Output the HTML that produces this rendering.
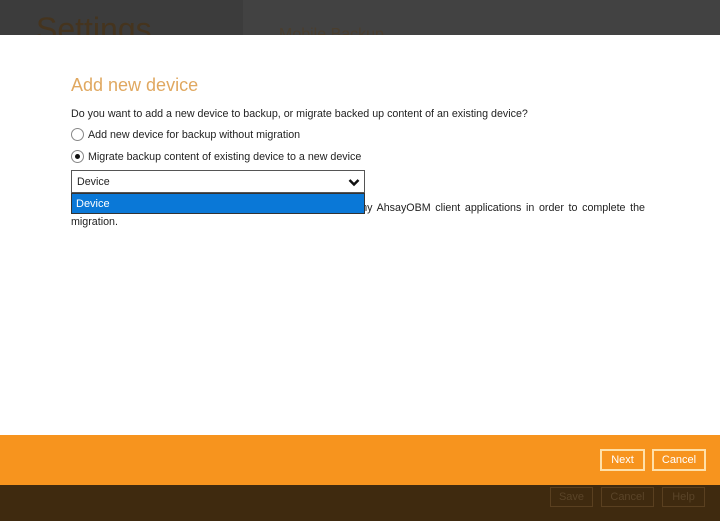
<!DOCTYPE html>
<html><head><meta charset="utf-8"><style>
*{margin:0;padding:0;box-sizing:border-box}
body{width:720px;height:521px;overflow:hidden;position:relative;font-family:"Liberation Sans",sans-serif;background:#fff}
.abs{position:absolute}
.t{font-size:10.7px;color:#222;white-space:nowrap}
.btn{position:absolute;border:2px solid #ffe0a8;color:#fff;font-size:11px;text-align:center;line-height:18px}
.bbtn{position:absolute;border:1px solid #5a4020;color:#5a4428;font-size:11px;text-align:center;line-height:18px}
</style></head><body>
<div class="abs" style="left:0;top:0;width:243px;height:35px;background:#3c3c3c;overflow:hidden">
<div class="abs" style="left:36px;top:9px;font-size:32px;color:#45341e;line-height:40px">Settings</div></div>
<div class="abs" style="left:243px;top:0;width:477px;height:35px;background:#424242;overflow:hidden">
<div class="abs" style="left:36px;top:26px;font-size:16px;color:#4a3e2e">Mobile Backup</div></div>
<div class="abs" style="left:71px;top:75px;font-size:18px;color:#e0a860">Add new device</div>
<div class="abs t" style="left:71px;top:108px">Do you want to add a new device to backup, or migrate backed up content of an existing device?</div>
<div class="abs" style="left:71px;top:128px;width:13px;height:13px;border:1px solid #888;border-radius:50%"></div>
<div class="abs t" style="left:88px;top:129px">Add new device for backup without migration</div>
<div class="abs" style="left:71px;top:150px;width:13px;height:13px;border:1px solid #888;border-radius:50%"><div class="abs" style="left:3px;top:3px;width:5px;height:5px;background:#111;border-radius:50%"></div></div>
<div class="abs t" style="left:88px;top:151px">Migrate backup content of existing device to a new device</div>
<div class="abs t" style="left:71px;top:201px;width:574px;text-align:justify;white-space:normal;line-height:14px">You are required to sign in with your backup account on any AhsayOBM client applications in order to complete the migration.</div>
<div class="abs" style="left:71px;top:170px;width:294px;height:23px;border:1px solid #555;background:#fff"><div class="abs t" style="left:5px;top:5px">Device</div>
<svg class="abs" style="left:276px;top:7px" width="12" height="9" viewBox="0 0 12 9"><path d="M1.5 2 L6 6.5 L10.5 2" stroke="#111" stroke-width="2.5" fill="none"/></svg></div>
<div class="abs" style="left:71px;top:193px;width:294px;height:21px;background:#0a78d7;border:1px solid #333"><div class="abs" style="left:4px;top:4px;font-size:11px;color:#fff">Device</div></div>
<div class="abs" style="left:0;top:435px;width:720px;height:50px;background:#f7941e"></div>
<div class="btn" style="left:600px;top:449px;width:45px;height:22px">Next</div>
<div class="btn" style="left:652px;top:449px;width:54px;height:22px">Cancel</div>
<div class="abs" style="left:0;top:485px;width:720px;height:36px;background:#3f2a0f"></div>
<div class="bbtn" style="left:550px;top:487px;width:43px;height:20px">Save</div>
<div class="bbtn" style="left:601px;top:487px;width:53px;height:20px">Cancel</div>
<div class="bbtn" style="left:662px;top:487px;width:43px;height:20px">Help</div>
</body></html>
